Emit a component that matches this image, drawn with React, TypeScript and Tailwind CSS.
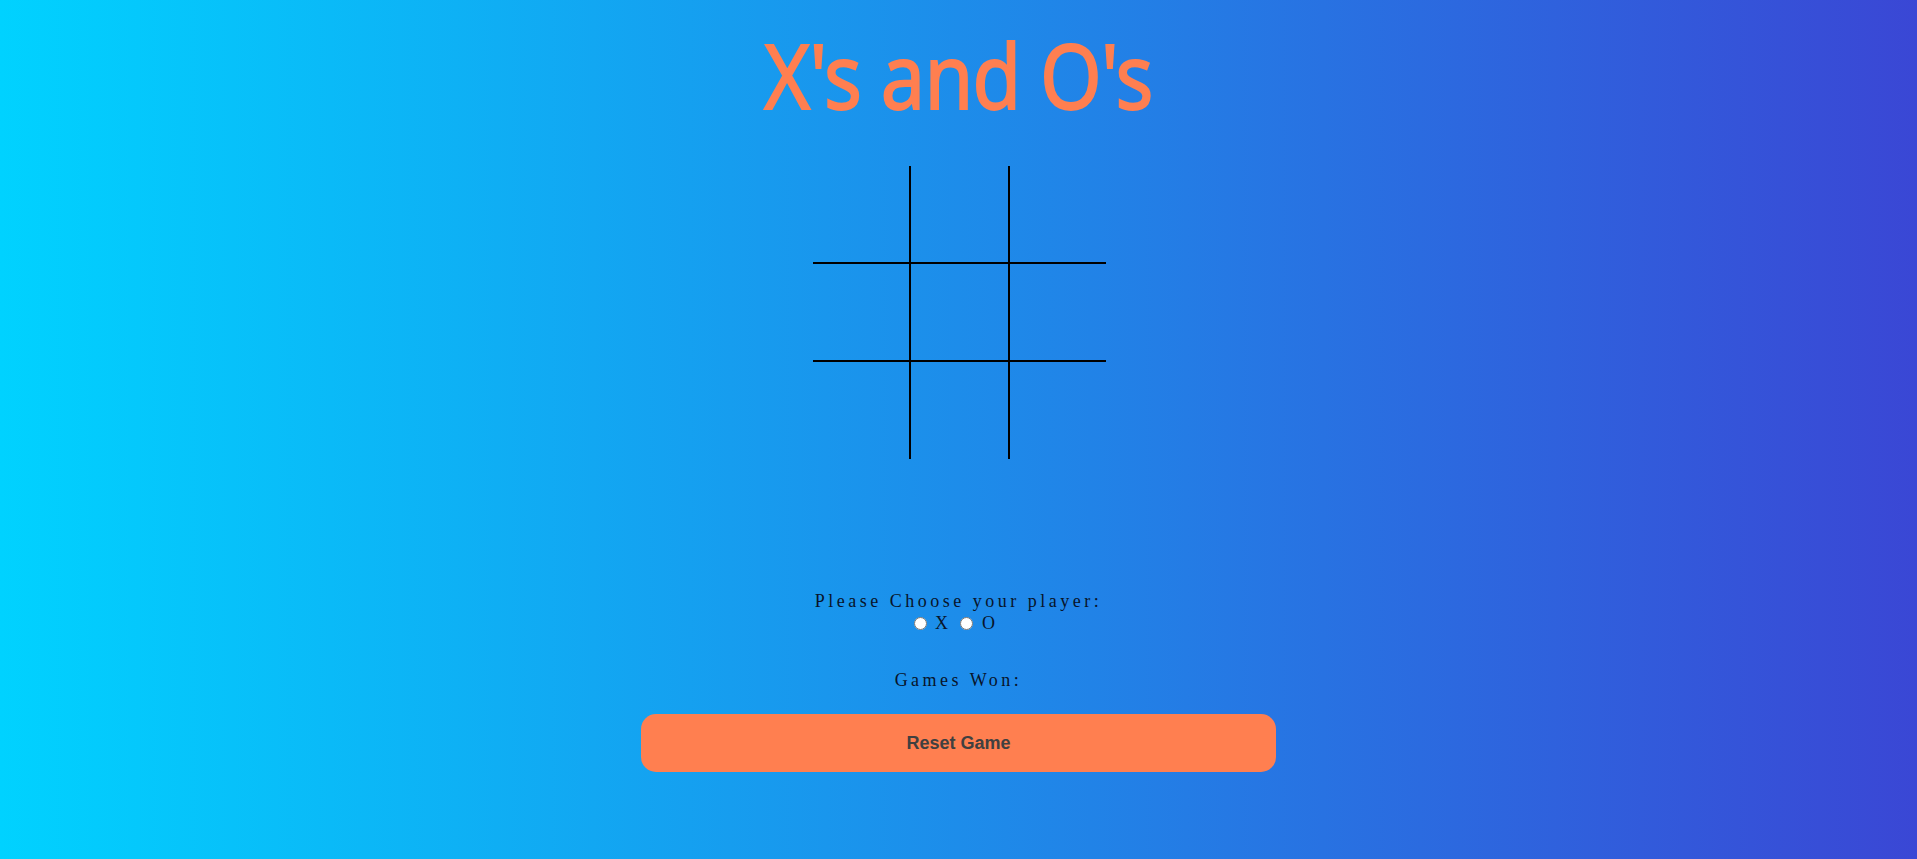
import * as React from "react";

const cells = [0, 1, 2, 3, 4, 5, 6, 7, 8];

function cellBorder(i: number) {
  const col = i % 3;
  const row = Math.floor(i / 3);
  return [
    col < 2 ? "border-r-2" : "",
    row < 2 ? "border-b-2" : "",
  ].join(" ");
}

export default function App() {
  const [board, setBoard] = React.useState<string[]>(Array(9).fill(""));
  const [player, setPlayer] = React.useState<string>("");

  return (
    <div className="min-h-screen w-full bg-linear-to-r/srgb from-[#00d2ff] to-[#3a47d5] flex flex-col items-center">
      <h1 className="mt-[25px] text-[89px] leading-[100px] font-normal tracking-[-1px] scale-x-[0.89] text-[#ff7f50] [-webkit-text-stroke:1.8px_#ff7f50] font-['Noto_Sans',sans-serif]">
        X's and O's
      </h1>

      <div className="mt-[41px] ml-[2px] grid grid-cols-[98px_99px_96px] grid-rows-[98px_98px_97px]">
        {cells.map((i) => (
          <button
            key={i}
            className={
              "border-black text-5xl text-white font-['Noto_Sans',sans-serif] " +
              cellBorder(i)
            }
            onClick={() => {
              if (!player || board[i]) return;
              const next = [...board];
              next[i] = player;
              setBoard(next);
            }}
          >
            {board[i]}
          </button>
        ))}
      </div>

      <div className="mt-[131px] flex flex-col items-center text-[18px] leading-[22px] tracking-[3.5px] text-[#08142a] font-['Liberation_Serif',serif]">
        <div>Please Choose your player:</div>
        <div className="flex items-center pr-[8px] tracking-normal">
          <input
            type="radio"
            name="player"
            className="m-0 mr-[8px] h-[13px] w-[13px]"
            checked={player === "X"}
            onChange={() => setPlayer("X")}
          />
          <span>X</span>
          <input
            type="radio"
            name="player"
            className="m-0 ml-[12px] mr-[9px] h-[13px] w-[13px]"
            checked={player === "O"}
            onChange={() => setPlayer("O")}
          />
          <span>O</span>
        </div>
        <div className="mt-[35px]">Games Won:</div>
      </div>

      <button
        className="mt-[23px] h-[58px] w-[635px] rounded-[15px] bg-[#ff7f50] text-[18px] font-bold text-[#404040] font-['Liberation_Sans',sans-serif]"
        onClick={() => {
          setBoard(Array(9).fill(""));
          setPlayer("");
        }}
      >
        Reset Game
      </button>
    </div>
  );
}
